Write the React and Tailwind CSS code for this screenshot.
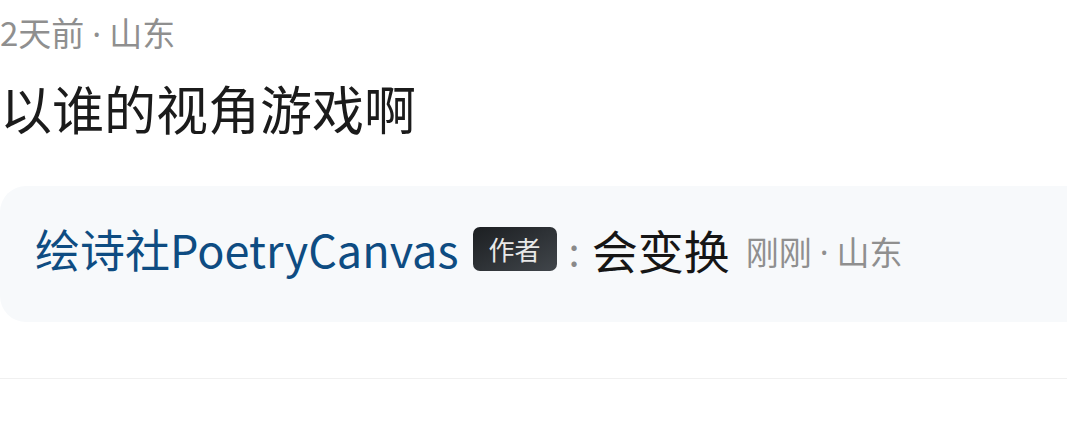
import React from 'react';

const font = { fontFamily: '"Noto Sans CJK SC", "Noto Sans", sans-serif' };
const latin = { fontFamily: '"Noto Sans", sans-serif' };

const Dot = () => (
  <span className="mx-[8px] leading-none" style={latin}>·</span>
);

const AuthorBadge = () => (
  <span className="inline-flex h-[44px] w-[84px] items-center justify-center rounded-[7px] bg-gradient-to-br from-[#1c1f22] to-[#41464b] text-[26px] leading-none text-[#e8e8e8]">
    作者
  </span>
);

const App = () => {
  return (
    <div className="h-[429px] w-full overflow-hidden bg-white" style={font}>
      {/* post meta */}
      <div className="h-[52px] pt-[12px] text-[33px] leading-[40px] text-[#8f8f8f]">
        2天前<Dot />山东
      </div>

      {/* post title */}
      <h1 className="mt-[24px] text-[52px] leading-[64px] font-normal text-[#1b1b1b]">以谁的视角游戏啊</h1>

      {/* reply preview */}
      <div className="mt-[46px] flex h-[136px] w-[1120px] items-center rounded-l-[26px] bg-[#f7f9fb] pb-[10px] pl-[35px]">
        <span className="text-[45px] leading-[56px] text-[#0e4c82]">绘诗社PoetryCanvas</span>
        <span className="ml-[14px]">
          <AuthorBadge />
        </span>
        <span className="ml-[12px] text-[40px] leading-[56px] text-[#8a8a8a]">:</span>
        <span className="ml-[12px] text-[46px] leading-[56px] text-[#161616]">会变换</span>
        <span className="ml-[16px] flex h-[56px] items-center pt-[4px] text-[33px] leading-[40px] text-[#8f8f8f]">
          刚刚<Dot />山东
        </span>
      </div>

      {/* divider */}
      <div className="mt-[56px] h-px w-full bg-[#f0f0f0]" />
    </div>
  );
};

export default App;
